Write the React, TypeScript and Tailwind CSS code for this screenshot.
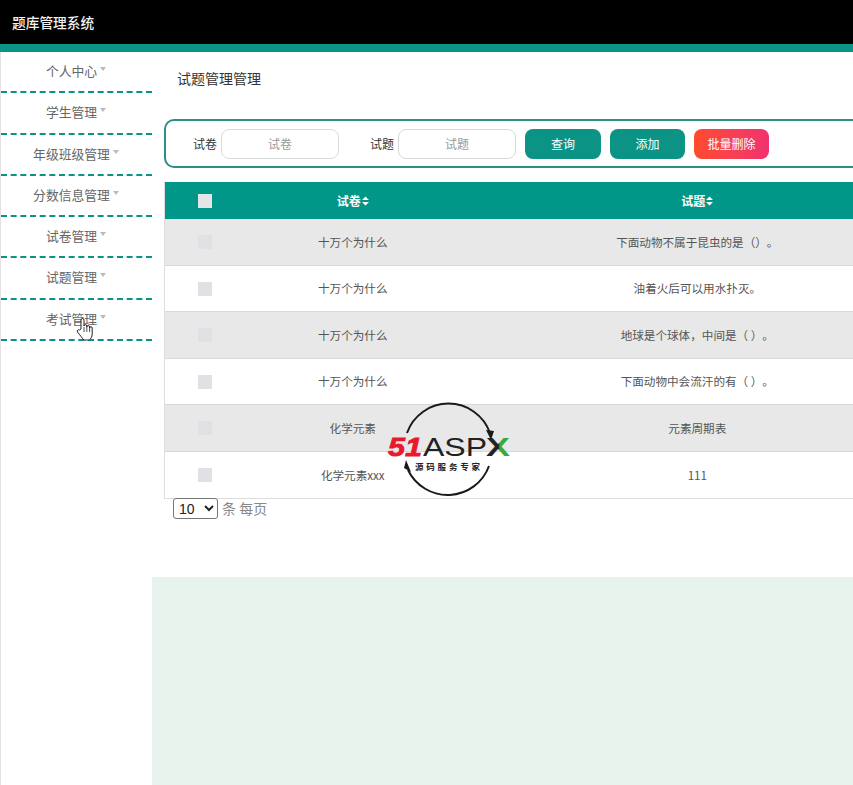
import React from "react";

const font = { fontFamily: '"Noto Sans CJK SC", "Liberation Sans", sans-serif' };

const menu = ["个人中心", "学生管理", "年级班级管理", "分数信息管理", "试卷管理", "试题管理", "考试管理"];
const rows = [
  ["十万个为什么", "下面动物不属于昆虫的是（）。"],
  ["十万个为什么", "油着火后可以用水扑灭。"],
  ["十万个为什么", "地球是个球体，中间是（ ）。"],
  ["十万个为什么", "下面动物中会流汗的有（ ）。"],
  ["化学元素", "元素周期表"],
  ["化学元素xxx", "111"],
];

function Sort() {
  return (
    <svg width="7" height="10" viewBox="0 0 7 10" className="inline-block">
      <path d="M0 4 L3.5 0.5 L7 4 Z M0 6 L3.5 9.5 L7 6 Z" fill="#ffffff" />
    </svg>
  );
}

function Logo() {
  return (
    <svg width="130" height="96" viewBox="0 0 130 96" className="absolute left-[385px] top-[400px]">
      <defs>
        <linearGradient id="xfill" x1="0" x2="1" y1="0" y2="0">
          <stop offset="0.5" stopColor="#222222" />
          <stop offset="0.55" stopColor="#39ab35" />
        </linearGradient>
      </defs>
      <path d="M22 33 A44 44 0 0 1 105 33" fill="none" stroke="#1a1a1a" strokeWidth="2" />
      <path d="M101 30 L109 31 L106 40 Z" fill="#1a1a1a" />
      <path d="M104 66 A44 44 0 0 1 23 70" fill="none" stroke="#1a1a1a" strokeWidth="2" />
      <path d="M26 72 L19 68 L21 60 Z" fill="#1a1a1a" />
      <text x="3" y="56" fontFamily="Liberation Sans, sans-serif" fontWeight="700" fontStyle="italic" fontSize="26" fill="#e8192c" stroke="#e8192c" strokeWidth="0.8" textLength="34" lengthAdjust="spacingAndGlyphs">51</text>
      <text x="38" y="56" fontFamily="Liberation Sans, sans-serif" fontSize="26" fill="#222222" textLength="64" lengthAdjust="spacingAndGlyphs">ASP</text>
      <text x="101" y="56" fontFamily="Liberation Sans, sans-serif" fontWeight="700" fontSize="26" fill="url(#xfill)" textLength="24" lengthAdjust="spacingAndGlyphs">X</text>
      <text x="30" y="70" fontFamily="Noto Sans CJK SC, sans-serif" fontWeight="700" fontSize="8.5" fill="#222222" textLength="65">源码服务专家</text>
    </svg>
  );
}

function Hand() {
  return (
    <svg width="18" height="24" viewBox="0 0 18 24" className="absolute left-[76px] top-[317px]">
      <path
        d="M5 12 V3 a1.5 1.5 0 0 1 3 0 V9 a1.4 1.4 0 0 1 2.8 0 V10 a1.4 1.4 0 0 1 2.8 0 V11 a1.3 1.3 0 0 1 2.6 0 V17 c0 3 -1.5 5 -3 6 H8 C6 21 4 18 1.5 15 c-1 -1.5 .8 -3 2 -2 Z"
        fill="#ffffff"
        stroke="#222222"
        strokeWidth="1"
        strokeLinejoin="round"
      />
      <path d="M8 10 V15 M10.8 10 V15 M13.6 11 V15" stroke="#222222" strokeWidth="0.8" />
    </svg>
  );
}

function Box({ header }: { header?: boolean }) {
  return <span className={`block w-[14px] h-[14px] ${header ? "bg-[#e3e5e8]" : "bg-[#dfe1e5]"}`} />;
}

export default function App() {
  return (
    <div className="relative w-[853px] h-[785px] overflow-hidden bg-white [text-spacing-trim:space-all]" style={font}>
      <header className="h-[52px] bg-black border-b-[8px] border-[#0b9486] flex items-center pl-[12px]">
        <span className="text-[13.7px] font-medium text-[#f2f2f2]">题库管理系统</span>
      </header>
      <div className="flex h-[733px]">
        <aside className="w-[152px] shrink-0 border-l border-[#e2e2e2]">
          {menu.map((m) => (
            <div
              key={m}
              className="h-[41.25px] border-b-2 border-dashed border-[#0b9486] flex items-center justify-center gap-[3px] text-[12.8px] text-[#666666] pb-[2px] pr-[1px]"
            >
              <span>{m}</span>
              <span className="mb-[3px] w-0 h-0 border-x-[3.5px] border-x-transparent border-t-[4px] border-t-[#bbbbbb]" />
            </div>
          ))}
        </aside>
        <main className="flex-1 min-w-0 flex flex-col">
          <div className="h-[525px] pl-[12px] overflow-hidden">
            <h1 className="pl-[13px] pt-[16px] text-[14px] leading-[20px] font-normal text-[#333333]">试题管理管理</h1>
            <div className="mt-[31px] w-[720px] h-[49px] border-2 border-[#2b9088] rounded-[10px] flex items-center pl-[27px] text-[12px] text-[#333333]">
              <span className="mr-[4px]">试卷</span>
              <div className="w-[118px] h-[30px] border border-[#d9d9d9] rounded-[8px] flex items-center justify-center text-[#999999]">试卷</div>
              <span className="ml-[31px] mr-[4px]">试题</span>
              <div className="w-[118px] h-[30px] border border-[#d9d9d9] rounded-[8px] flex items-center justify-center text-[#999999]">试题</div>
              <div className="ml-[9px] w-[76px] h-[30px] rounded-[8px] bg-[#0b9486] text-white text-[12px] flex items-center justify-center">查询</div>
              <div className="ml-[9px] w-[75px] h-[30px] rounded-[8px] bg-[#0b9486] text-white text-[12px] flex items-center justify-center">添加</div>
              <div className="ml-[9px] w-[75px] h-[30px] rounded-[8px] bg-gradient-to-r from-[#ff4a2a] to-[#f0326e] text-white text-[12px] flex items-center justify-center">批量删除</div>
            </div>
            <div className="mt-[14px] w-[770px] border-l border-b border-[#dddddd]">
              <div className="h-[37px] bg-[#009688] flex items-center text-[12px] font-bold text-white">
                <div className="w-[80px] flex justify-center"><Box header /></div>
                <div className="w-[216px] flex justify-center items-center gap-[1px]">试卷<Sort /></div>
                <div className="w-[474px] flex justify-center items-center gap-[1px]">试题<Sort /></div>
              </div>
              {rows.map((r, i) => (
                <div
                  key={i}
                  className={`h-[46.5px] pt-[1px] flex items-center text-[11.6px] text-[#555555] border-b border-[#d8d8d8] last:border-b-0 ${i % 2 === 0 ? "bg-[#e8e8e8]" : "bg-white"}`}
                >
                  <div className="w-[80px] flex justify-center"><Box /></div>
                  <div className="w-[216px] text-center">{r[0]}</div>
                  <div className="w-[474px] text-center">{r[1]}</div>
                </div>
              ))}
            </div>
            <div className="-mt-[1px] pl-[9px] flex items-start h-[22px] text-[14px] leading-[21px] text-[#888888]">
              <select defaultValue="10" className="w-[45px] h-[21px] border border-[#767676] rounded-[3px] bg-white text-[14px] text-[#222222] mr-[4px] pl-[1px] appearance-auto" style={{ fontFamily: '"Liberation Sans", sans-serif' }}>
                <option value="10">10</option>
                <option value="20">20</option>
              </select>
              <span>条 每页</span>
            </div>
          </div>
          <div className="flex-1 bg-[#e8f3ee]" />
        </main>
      </div>
      <Logo />
      <Hand />
    </div>
  );
}
